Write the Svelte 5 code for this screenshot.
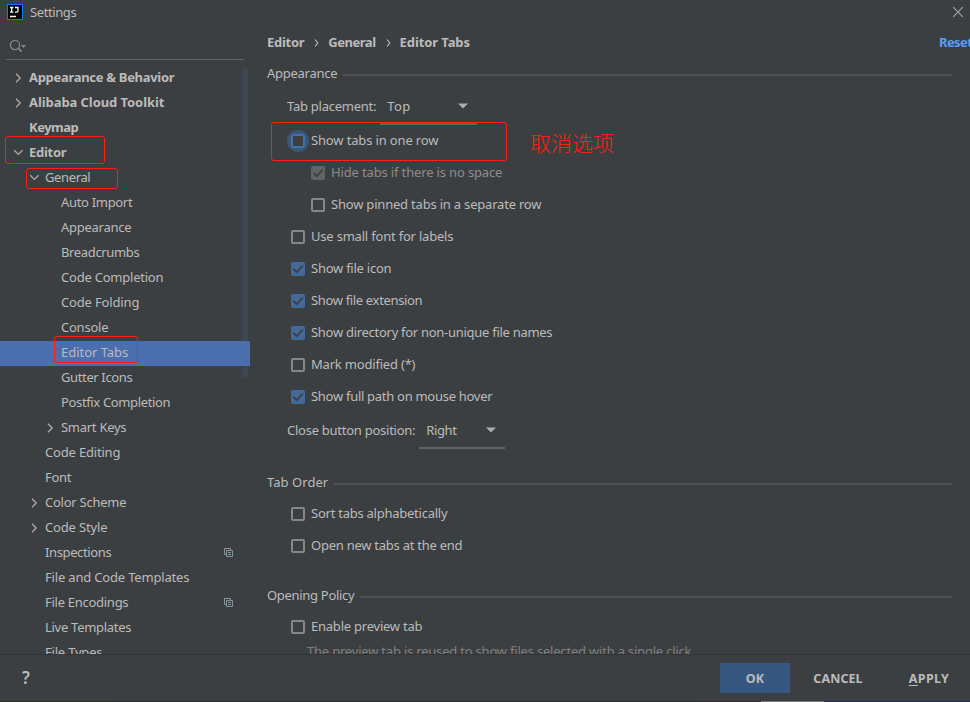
<script>
  const tree = [
    { label: 'Appearance & Behavior', x: 29, w: 145, bold: true, arrow: 'right' },
    { label: 'Alibaba Cloud Toolkit', x: 29, w: 135, bold: true, arrow: 'right' },
    { label: 'Keymap', x: 29, w: 49, bold: true },
    { label: 'Editor', x: 29, w: 37, bold: true, arrow: 'down', mark: { x: 5, y: -5, w: 100, h: 28 } },
    { label: 'General', x: 45, w: 45, arrow: 'down', mark: { x: 26, y: 2, w: 92, h: 21 } },
    { label: 'Auto Import', x: 61, w: 71 },
    { label: 'Appearance', x: 61, w: 70 },
    { label: 'Breadcrumbs', x: 61, w: 78 },
    { label: 'Code Completion', x: 61, w: 102 },
    { label: 'Code Folding', x: 61, w: 78 },
    { label: 'Console', x: 61, w: 47 },
    { label: 'Editor Tabs', x: 61, w: 67, selected: true, mark: { x: 54, y: -5, w: 84, h: 27 } },
    { label: 'Gutter Icons', x: 61, w: 71 },
    { label: 'Postfix Completion', x: 61, w: 109 },
    { label: 'Smart Keys', x: 61, w: 65, arrow: 'right' },
    { label: 'Code Editing', x: 45, w: 75 },
    { label: 'Font', x: 45, w: 26 },
    { label: 'Color Scheme', x: 45, w: 81, arrow: 'right' },
    { label: 'Code Style', x: 45, w: 62, arrow: 'right' },
    { label: 'Inspections', x: 45, w: 66, copy: true },
    { label: 'File and Code Templates', x: 45, w: 144 },
    { label: 'File Encodings', x: 45, w: 83, copy: true },
    { label: 'Live Templates', x: 45, w: 86 },
    { label: 'File Types', x: 45, w: 57 },
  ];

  const appearance = [
    { label: 'Show tabs in one row', w: 127, focus: true },
    { label: 'Hide tabs if there is no space', w: 171, on: true, disabled: true, nested: true },
    { label: 'Show pinned tabs in a separate row', w: 210, nested: true },
    { label: 'Use small font for labels', w: 142 },
    { label: 'Show file icon', w: 80, on: true },
    { label: 'Show file extension', w: 111, on: true },
    { label: 'Show directory for non-unique file names', w: 241, on: true },
    { label: 'Mark modified (*)', w: 104 },
    { label: 'Show full path on mouse hover', w: 181, on: true },
  ];
  const order = [
    { label: 'Sort tabs alphabetically', w: 136 },
    { label: 'Open new tabs at the end', w: 151 },
  ];
  const policy = [{ label: 'Enable preview tab', w: 111 }];

  // Tracks the label so that it spans the given width.
  function fit(node, width) {
    const natural = node.getBoundingClientRect().width;
    node.style.letterSpacing = `${(width + 0.3 - natural) / node.textContent.length}px`;
  }
</script>

{#snippet label(text, width)}
  <span class="text" use:fit={width}>{text}</span>
{/snippet}

{#snippet checks(items)}
  {#each items as c}
    <div class="check" class:nested={c.nested} class:disabled={c.disabled}>
      <span class="box" class:on={c.on} class:focus={c.focus}>
        {#if c.on}
          <svg width="14" height="14" viewBox="0 0 14 14"><path d="M2.5 7 5.8 10.3 11.7 3.5" fill="none" stroke="#3c3f41" stroke-width="1.8" /></svg>
        {/if}
      </span>
      {@render label(c.label, c.w)}
      {#if c.focus}
        <i class="mark focusmark"></i>
        <span class="note">取消选项</span>
      {/if}
    </div>
  {/each}
{/snippet}

{#snippet legend(text, width)}
  <div class="legend">{@render label(text, width)}<hr /></div>
{/snippet}

<div class="window">
  <header>
    <svg class="logo" width="16" height="16" viewBox="0 0 16 16">
      <rect width="16" height="16" fill="#087cfa" /><rect x="1" y="1" width="14" height="14" fill="#000" />
      <path d="M3 3.5h3.4M4.7 3.5v4.6M3 8.1h3.4M8 3.5h3v3.2q0 1.4-1.4 1.4H8M3 12.5h6" stroke="#fff" stroke-width="1.3" fill="none" />
    </svg>
    {@render label('Settings', 46)}
    <svg class="close" width="12" height="12" viewBox="0 0 12 12"><path d="M1.2 1.2 10.8 10.8M10.8 1.2 1.2 10.8" stroke="#a4a6a8" stroke-width="1.1" /></svg>
  </header>

  <div class="body">
    <aside>
      <div class="search">
        <svg width="18" height="14" viewBox="0 0 18 14">
          <circle cx="6" cy="6" r="4.6" fill="none" stroke="#7f8b91" stroke-width="1.2" />
          <path d="M9.4 9.4 12.6 12.6" stroke="#7f8b91" stroke-width="1.6" /><path d="M12 6h5l-2.5 3z" fill="#7f8b91" />
        </svg>
      </div>
      <div class="tree">
        {#each tree as t}
          <div class="row" class:bold={t.bold} class:selected={t.selected} style:padding-left="{t.x - 16}px">
            <span class="arrow">
              {#if t.arrow === 'right'}
                <svg width="10" height="10" viewBox="0 0 10 10"><path d="M3 .8 7.2 5 3 9.2" fill="none" stroke="#adadad" stroke-width="1.3" /></svg>
              {:else if t.arrow === 'down'}
                <svg width="10" height="10" viewBox="0 0 10 10"><path d="M1.2 2.2 5.4 6.4 9.6 2.2" fill="none" stroke="#adadad" stroke-width="1.3" /></svg>
              {/if}
            </span>
            {@render label(t.label, t.w)}
            {#if t.copy}
              <svg class="copy" width="9" height="9" viewBox="0 0 9 9"><path d="M2 6.5H.5v-6h6V2M2.5 2.5h6v6h-6zM4 4.5h3M4 6.5h3" fill="none" stroke="#87939a" /></svg>
            {/if}
            {#if t.mark}
              <i class="mark" style:left="{t.mark.x}px" style:top="{t.mark.y}px" style:width="{t.mark.w}px" style:height="{t.mark.h}px"></i>
            {/if}
          </div>
        {/each}
        <div class="scroll"></div>
      </div>
    </aside>

    <main>
      <nav>
        {@render label('Editor', 37)}
        <svg width="5" height="8" viewBox="0 0 5 8"><path d="M1 .5 3.8 4 1 7.5" fill="none" stroke="#bbb" stroke-width="1.2" /></svg>
        {@render label('General', 47)}
        <svg width="5" height="8" viewBox="0 0 5 8"><path d="M1 .5 3.8 4 1 7.5" fill="none" stroke="#bbb" stroke-width="1.2" /></svg>
        {@render label('Editor Tabs', 70)}
        <span class="reset">{@render label('Reset', 33)}</span>
      </nav>

      {@render legend('Appearance', 70)}
      <div class="combo first">
        {@render label('Tab placement:', 89)}
        <div class="select top">{@render label('Top', 23)}<svg width="10" height="6" viewBox="0 0 10 6"><path d="M0 .5h10L5 5.5z" fill="#adadad" /></svg></div>
      </div>
      {@render checks(appearance)}
      <div class="combo second">
        {@render label('Close button position:', 128)}
        <div class="select right">{@render label('Right', 30)}<svg width="10" height="6" viewBox="0 0 10 6"><path d="M0 .5h10L5 5.5z" fill="#adadad" /></svg></div>
      </div>

      <section class="order">
        {@render legend('Tab Order', 61)}
        {@render checks(order)}
      </section>
      <section class="policy">
        {@render legend('Opening Policy', 87)}
        {@render checks(policy)}
        <p>{@render label('The preview tab is reused to show files selected with a single click', 384)}</p>
      </section>
    </main>
  </div>

  <footer>
    <span class="help">?</span>
    <button class="ok">{@render label('OK', 18)}</button>
    <button class="cancel">{@render label('CANCEL', 49)}</button>
    <button class="apply"><span class="text" use:fit={40}><u>A</u>PPLY</span></button>
  </footer>
  <div class="edge"></div>
</div>

<style>
  :global(body) { margin: 0; background: #3c3f41; }
  .window {
    width: 970px; height: 702px; overflow: hidden; display: flex; flex-direction: column;
    background: #3c3f41; color: #bbb; font: 13px/18px "Noto Sans", "Noto Sans CJK SC", sans-serif;
  }
  .text { white-space: pre; flex: none; }
  header { height: 26px; display: flex; align-items: center; padding: 0 6px 0 7px; box-sizing: border-box; flex: none; }
  header .text { margin-bottom: 2px; }
  .logo { margin: 0 7px 2px 0; }
  .close { margin: 0 0 2px auto; }
  .body { height: 628px; flex: none; display: flex; overflow: hidden; }
  aside { width: 250px; flex: none; }
  .search { height: 33px; width: 238px; margin-left: 6px; border-bottom: 1px solid #646566; display: flex; align-items: center; box-sizing: content-box; }
  .search svg { margin: 6px 0 0 3px; }
  .tree { position: relative; padding-top: 6px; }
  .row { position: relative; height: 25px; display: flex; align-items: center; box-sizing: border-box; padding-bottom: 2px; }
  .row .text { margin-bottom: 2px; }
  .selected { background: #4b6eaf; z-index: 1; }
  .bold, nav, button { font-weight: 700; }
  .arrow { width: 16px; height: 10px; display: flex; }
  .copy { position: absolute; left: 224px; top: 7px; }
  .mark { position: absolute; box-sizing: border-box; border: 1px solid #ff1e10; border-radius: 3px; z-index: 2; }
  .scroll { position: absolute; left: 242px; top: 8px; width: 6px; height: 310px; border-radius: 3px; background: #3e4751; }
  main { flex: 1; min-width: 0; padding-left: 17px; }
  nav { height: 32px; display: flex; align-items: center; position: relative; }
  nav svg { margin: 1px 9px 0 10px; }
  .reset { color: #589df6; margin-left: auto; width: 31px; overflow: hidden; display: flex; }
  .legend { height: 18px; display: flex; align-items: center; margin-top: 6px; }
  .legend hr { flex: 1; height: 2px; border: 0; margin: 4px 18px 0 6px; background: #515151; }
  .combo { display: flex; align-items: center; height: 34px; margin-left: 20px; }
  .combo > .text { margin-bottom: 4px; }
  .first { margin-top: 9px; }
  .second { margin-top: 2px; }
  .select { height: 34px; box-sizing: border-box; border-bottom: 2px solid #646464; display: flex; align-items: center; justify-content: space-between; padding: 0 9px 0 7px; }
  .select > * { margin-bottom: 2px; }
  .top { width: 97px; margin-left: 4px; }
  .right { width: 86px; margin-left: 4px; }
  .check { height: 32px; display: flex; align-items: center; padding-left: 24px; position: relative; }
  .check .text { margin-bottom: 2px; }
  .nested { padding-left: 44px; }
  .disabled { color: #8c8c8c; }
  .box { width: 14px; height: 14px; box-sizing: border-box; border: 2px solid #868788; border-radius: 2px; margin-right: 6px; flex: none; display: flex; }
  .on { border: 0; background: #43699a; }
  .disabled .box { background: #616365; }
  .focus { border-color: #4470a8; background: #3c3f41; position: relative; }
  .focus::before { content: ""; position: absolute; inset: -6px; border-radius: 50%; background: #3b5676; clip-path: path(evenodd, "M0 0H22V22H0ZM4 4H18V18H4Z"); }
  .focusmark { left: 4px; top: -3px; width: 236px; height: 39px; }
  .note { position: absolute; left: 263px; top: 2px; font: 300 21px/30px "Noto Sans CJK SC", sans-serif; color: #ff1e10; white-space: nowrap; }
  .order { margin-top: 24px; }
  .order .legend, .policy .legend { margin-top: 0; margin-bottom: 7px; }
  .policy { margin-top: 24px; }
  p { margin: -1px 0 0 40px; color: #808080; }
  footer { height: 46px; flex: none; border-top: 1px solid #323334; display: flex; align-items: center; }
  .help { font-size: 17px; font-weight: 600; margin-left: 22px; width: 698px; }
  button { height: 30px; border: 0; padding: 0; background: none; color: #bbb; font-family: inherit; font-size: 12.5px; display: flex; align-items: center; justify-content: center; }
  .ok { width: 70px; background: #365880; }
  .cancel { width: 70px; margin-left: 13px; }
  .apply { width: 70px; margin-left: 21px; }
  u { text-underline-offset: 2px; }
  .edge { height: 1px; background: linear-gradient(90deg, #29332b 0 109px, #2b2d2e 109px 700px, #312d32 700px 761px, #777 761px 824px, #252b56 824px); }
</style>
